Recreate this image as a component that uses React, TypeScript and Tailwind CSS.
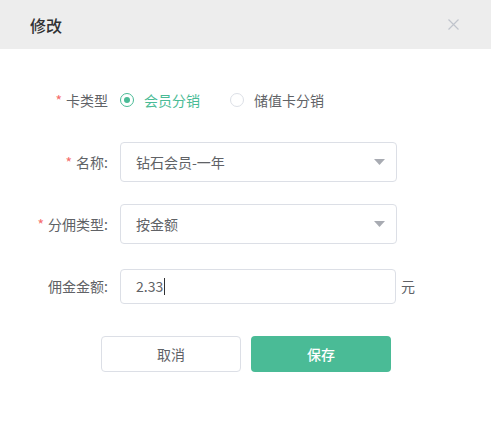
import React from 'react';

const font = { fontFamily: '"Noto Sans CJK SC", "Liberation Sans", sans-serif' };

const Caret: React.FC = () => (
  <svg width="11" height="6" viewBox="0 0 11 6" className="shrink-0">
    <path d="M0 0 L11 0 L5.5 6 Z" fill="#a8abb2" />
  </svg>
);

const Label: React.FC<{ text: string; required?: boolean }> = ({ text, required }) => (
  <div className="w-[110px] shrink-0 pr-[2px] text-right text-[14px] text-[#606266]">
    {required && <span className="mr-[4px] text-[#f56c6c]">*</span>}
    {text}
  </div>
);

const Select: React.FC<{ value: string }> = ({ value }) => (
  <div className="ml-[10px] flex h-[40px] w-[277px] items-center justify-between rounded-[4px] border border-[#dcdfe6] pl-[15px] pr-[11px] text-[14px] text-[#606266]">
    <span>{value}</span>
    <Caret />
  </div>
);

export default function App() {
  return (
    <div className="h-[432px] w-[491px] bg-white" style={font}>
      <div className="flex h-[49px] items-center justify-between bg-[#ededed] pl-[30px] pr-[32px]">
        <h1 className="text-[16px] font-medium text-[#303133]">修改</h1>
        <svg width="11" height="11" viewBox="0 0 11 11">
          <path d="M0.5 0.5 L10.5 10.5 M10.5 0.5 L0.5 10.5" stroke="#c0c4cc" strokeWidth="1.2" />
        </svg>
      </div>

      <div className="pt-[31px]">
        <div className="mb-[22px] flex h-[40px] items-center">
          <Label text="卡类型" required />
          <div className="ml-[10px] flex items-center text-[14px]">
            <span className="flex h-[14px] w-[14px] items-center justify-center rounded-full border border-[#4abb96]">
              <span className="h-[6px] w-[6px] rounded-full bg-[#4abb96]" />
            </span>
            <span className="ml-[10px] text-[#4abb96]">会员分销</span>
            <span className="ml-[30px] h-[14px] w-[14px] rounded-full border border-[#dcdfe6]" />
            <span className="ml-[10px] text-[#606266]">储值卡分销</span>
          </div>
        </div>

        <div className="mb-[22px] flex h-[40px] items-center">
          <Label text="名称:" required />
          <Select value="钻石会员-一年" />
        </div>

        <div className="mb-[22px] flex h-[40px] items-center">
          <Label text="分佣类型:" required />
          <Select value="按金额" />
        </div>

        <div className="flex h-[40px] items-center">
          <Label text="佣金金额:" />
          <div className="ml-[10px] flex h-[35px] w-[276px] items-center rounded-[4px] border border-[#dcdfe6] pl-[15px] text-[14px] text-[#606266]">
            <span>2.33</span>
            <span className="ml-[1px] h-[17px] w-px bg-[#303133]" />
          </div>
          <span className="ml-[5px] text-[14px] text-[#606266]">元</span>
        </div>

        <div className="mt-[30px] flex gap-[10px] pl-[101px]">
          <button className="h-[36px] w-[140px] rounded-[4px] border border-[#dcdfe6] bg-white text-[14px] text-[#606266]">
            取消
          </button>
          <button className="h-[36px] w-[140px] rounded-[4px] bg-[#4abb96] text-[14px] font-medium text-white">
            保存
          </button>
        </div>
      </div>
    </div>
  );
}
